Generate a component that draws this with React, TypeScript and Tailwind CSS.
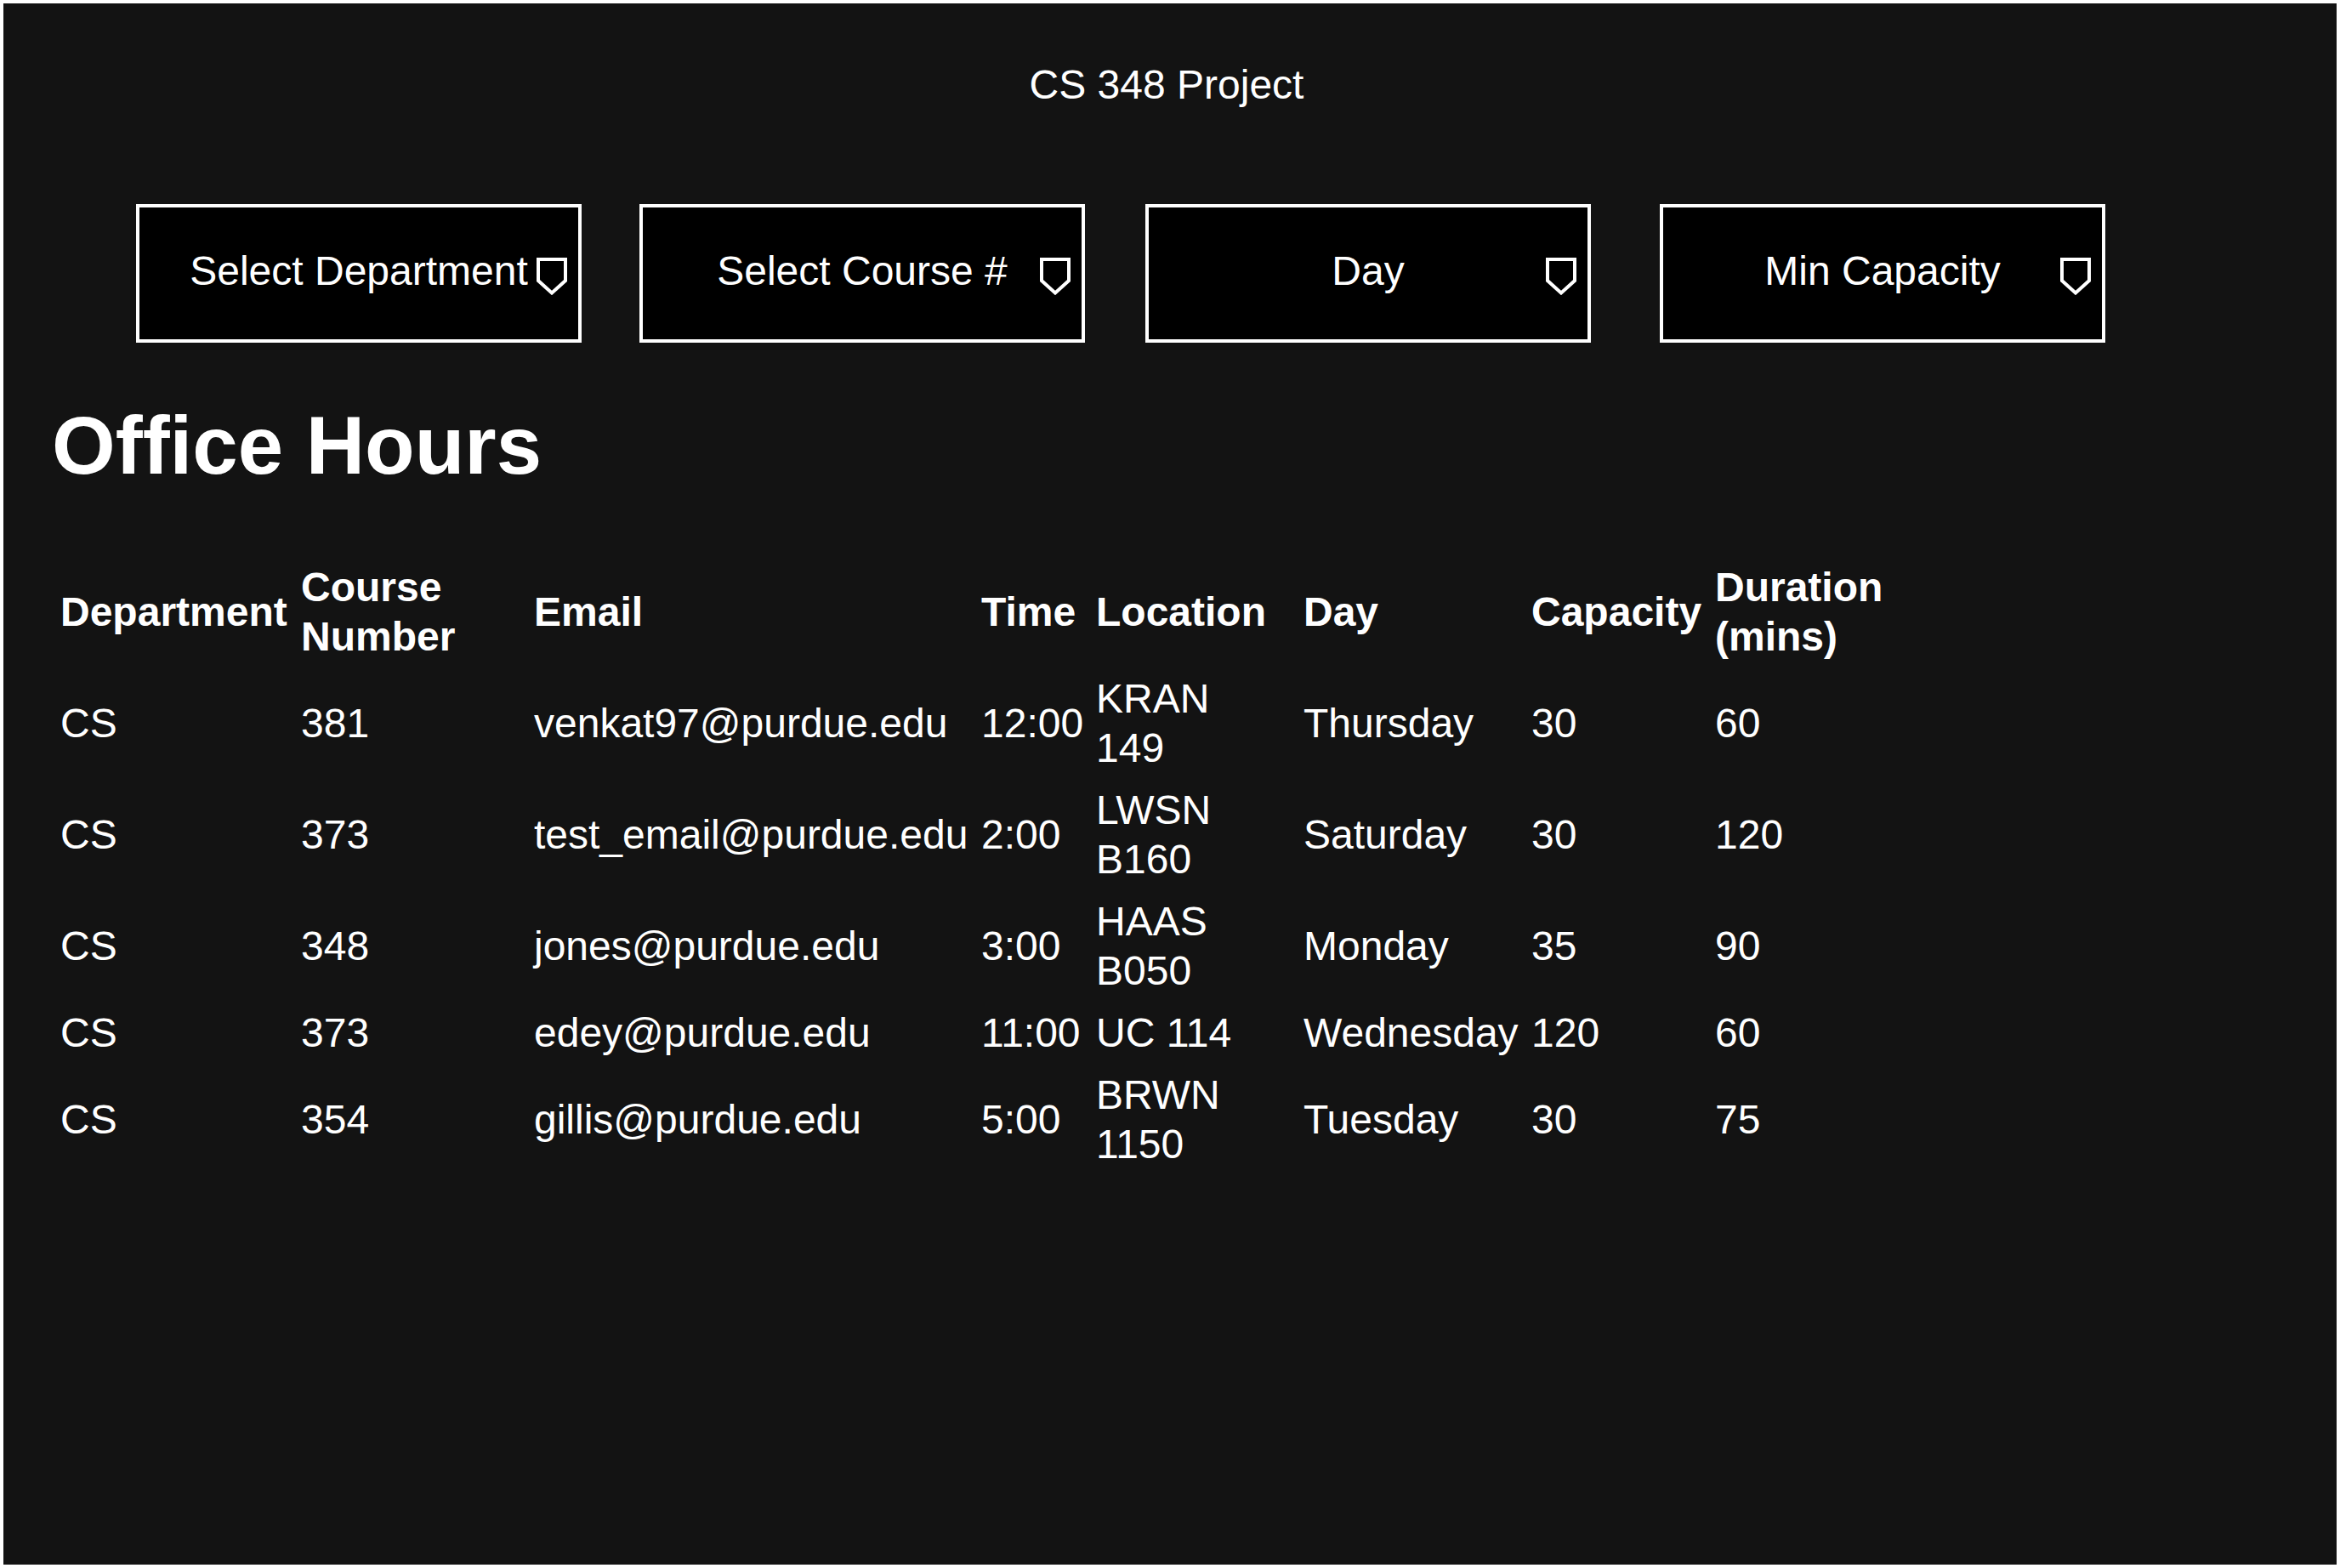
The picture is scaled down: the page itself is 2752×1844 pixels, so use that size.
import React from 'react';

const filters = [
    { label: 'Select Department', margin: 'ml-[156px]' },
    { label: 'Select Course #', margin: 'ml-[68px]' },
    { label: 'Day', margin: 'ml-[71px]' },
    { label: 'Min Capacity', margin: 'ml-[81px]' }
];

const rows = [
    { dept: 'CS', course: '381', email: 'venkat97@purdue.edu', time: '12:00', location: 'KRAN 149', day: 'Thursday', capacity: '30', duration: '60' },
    { dept: 'CS', course: '373', email: 'test_email@purdue.edu', time: '2:00', location: 'LWSN B160', day: 'Saturday', capacity: '30', duration: '120' },
    { dept: 'CS', course: '348', email: 'jones@purdue.edu', time: '3:00', location: 'HAAS B050', day: 'Monday', capacity: '35', duration: '90' },
    { dept: 'CS', course: '373', email: 'edey@purdue.edu', time: '11:00', location: 'UC 114', day: 'Wednesday', capacity: '120', duration: '60' },
    { dept: 'CS', course: '354', email: 'gillis@purdue.edu', time: '5:00', location: 'BRWN 1150', day: 'Tuesday', capacity: '30', duration: '75' }
];

function ArrowIcon() {
    return (
        <svg width="36" height="44" viewBox="0 0 36 44" className="absolute top-[59px] right-[13px]">
            <polygon points="2,2 34,2 34,27 18,41.5 2,27" fill="none" stroke="white" strokeWidth={4} />
        </svg>
    );
}

export default function App() {
    return (
        <div className="h-screen w-full border-4 border-white bg-[#131313] text-white font-['Liberation_Sans',Arial,sans-serif] overflow-hidden">
            <p className="mt-[67px] pr-2 text-center text-[48px] leading-[58px]">CS 348 Project</p>

            <div className="mt-[111px] flex">
                {filters.map((f) => (
                    <div
                        key={f.label}
                        className={`${f.margin} relative flex h-[163px] w-[524px] items-center justify-center border-4 border-white bg-black pb-[6px] text-[48px] leading-[58px]`}
                    >
                        {f.label}
                        <ArrowIcon />
                    </div>
                ))}
            </div>

            <h1 className="mt-[66px] ml-[57px] text-[96px] font-bold leading-[110px]">Office Hours</h1>

            <table className="mt-[75px] ml-[67px] table-fixed text-left text-[48px] leading-[58px]">
                <thead>
                    <tr>
                        <th className="w-[283px] pt-[8px] pb-[7px] font-bold whitespace-nowrap">Department</th>
                        <th className="w-[274px] pt-[8px] pb-[7px] pr-4 font-bold">Course Number</th>
                        <th className="w-[526px] pt-[8px] pb-[7px] font-bold">Email</th>
                        <th className="w-[135px] pt-[8px] pb-[7px] font-bold">Time</th>
                        <th className="w-[244px] pt-[8px] pb-[7px] pr-[24px] font-bold whitespace-nowrap">Location</th>
                        <th className="w-[268px] pt-[8px] pb-[7px] font-bold">Day</th>
                        <th className="w-[216px] pt-[8px] pb-[7px] font-bold whitespace-nowrap">Capacity</th>
                        <th className="w-[220px] pt-[8px] pb-[7px] font-bold">Duration (mins)</th>
                    </tr>
                </thead>
                <tbody>
                    {rows.map((r, i) => (
                        <tr key={i}>
                            <td className="pt-[8px] pb-[7px]">{r.dept}</td>
                            <td className="pt-[8px] pb-[7px]">{r.course}</td>
                            <td className="pt-[8px] pb-[7px] whitespace-nowrap">{r.email}</td>
                            <td className="pt-[8px] pb-[7px] whitespace-nowrap">{r.time}</td>
                            <td className="pt-[8px] pb-[7px] pr-[24px]">{r.location}</td>
                            <td className="pt-[8px] pb-[7px] whitespace-nowrap">{r.day}</td>
                            <td className="pt-[8px] pb-[7px]">{r.capacity}</td>
                            <td className="pt-[8px] pb-[7px]">{r.duration}</td>
                        </tr>
                    ))}
                </tbody>
            </table>
        </div>
    );
}
